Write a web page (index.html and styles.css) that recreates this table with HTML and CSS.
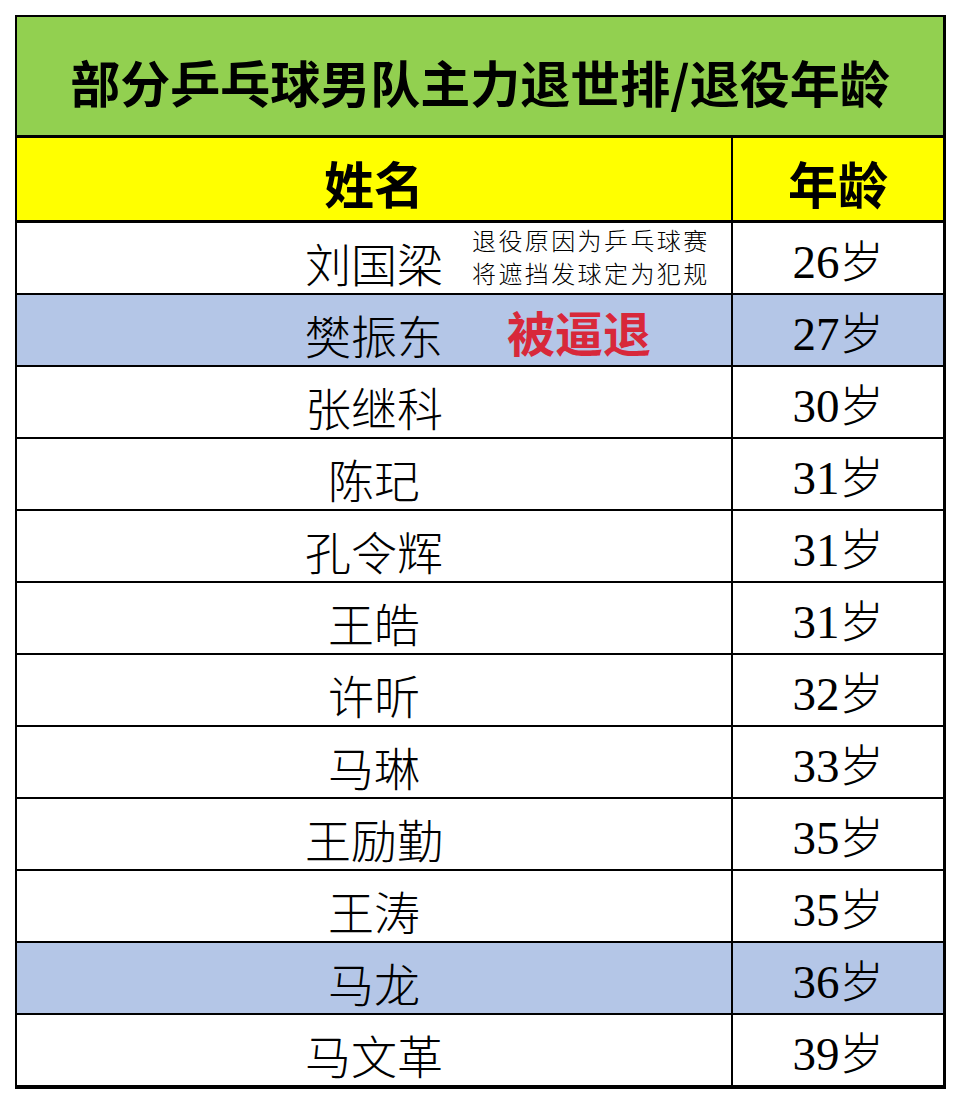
FILE: index.html
```html
<!DOCTYPE html>
<html lang="zh-CN">
<head>
<meta charset="utf-8">
<title>部分乒乓球男队主力退世排/退役年龄</title>
<link rel="stylesheet" href="styles.css">
</head>
<body>
<div class="page">
  <table class="sheet">
    <colgroup>
      <col class="name-col">
      <col class="age-col">
    </colgroup>
    <tr class="title-row">
      <td colspan="2" class="title">部分乒乓球男队主力退世排/退役年龄</td>
    </tr>
    <tr class="head-row">
      <td class="head">姓名</td>
      <td class="head age-head">年龄</td>
    </tr>
    <tr class="row">
      <td class="name"><div class="cell">刘国梁<div class="note"><div class="note-line">退役原因为乒乓球赛</div><div class="note-line">将遮挡发球定为犯规</div></div></div></td>
      <td class="age"><span class="num">26</span>岁</td>
    </tr>
    <tr class="row blue">
      <td class="name"><div class="cell">樊振东<span class="forced">被逼退</span></div></td>
      <td class="age"><span class="num">27</span>岁</td>
    </tr>
    <tr class="row"><td class="name">张继科</td><td class="age"><span class="num">30</span>岁</td></tr>
    <tr class="row"><td class="name">陈玘</td><td class="age"><span class="num">31</span>岁</td></tr>
    <tr class="row"><td class="name">孔令辉</td><td class="age"><span class="num">31</span>岁</td></tr>
    <tr class="row"><td class="name">王皓</td><td class="age"><span class="num">31</span>岁</td></tr>
    <tr class="row"><td class="name">许昕</td><td class="age"><span class="num">32</span>岁</td></tr>
    <tr class="row"><td class="name">马琳</td><td class="age"><span class="num">33</span>岁</td></tr>
    <tr class="row"><td class="name">王励勤</td><td class="age"><span class="num">35</span>岁</td></tr>
    <tr class="row"><td class="name">王涛</td><td class="age"><span class="num">35</span>岁</td></tr>
    <tr class="row blue"><td class="name">马龙</td><td class="age"><span class="num">36</span>岁</td></tr>
    <tr class="row last"><td class="name">马文革</td><td class="age"><span class="num">39</span>岁</td></tr>
  </table>
</div>
</body>
</html>
```

FILE: styles.css
```css
html, body {
  margin: 0;
  padding: 0;
  background: #ffffff;
}

.page {
  padding: 15px 0 0 15px;
}

.sheet {
  border-collapse: separate;
  border-spacing: 0;
  width: 931px;
  table-layout: fixed;
  border-top: 2px solid #000;
  border-left: 2px solid #000;
  border-right: 3px solid #000;
  border-bottom: 4px solid #000;
  color: #000;
  font-family: "Noto Sans CJK SC", "Noto Sans", sans-serif;
}

.name-col {
  width: 714px;
}

.age-col {
  width: 212px;
}

.sheet td {
  padding: 0;
  text-align: center;
  vertical-align: middle;
  box-sizing: border-box;
  line-height: 1;
}

.title {
  background: #92d050;
  height: 121px;
  font-size: 50px;
  font-weight: 700;
  border-bottom: 3px solid #000;
  padding-top: 10px !important;
}

.head {
  background: #ffff00;
  height: 85px;
  font-size: 50px;
  font-weight: 700;
  border-bottom: 3px solid #000;
  padding-top: 6px !important;
}

.age-head {
  border-left: 2px solid #000;
}

.row td {
  height: 72px;
  border-bottom: 2px solid #000;
}

.row.last td {
  height: 70px;
  border-bottom: none;
}

.row.blue td {
  background: #b4c6e7;
}

.name {
  font-size: 46px;
  font-weight: 300;
  padding-top: 8px !important;
}

.age {
  border-left: 2px solid #000;
  font-size: 44px;
  font-weight: 300;
  padding-top: 6px !important;
}

.num {
  font-family: "Liberation Serif", "Times New Roman", serif;
  font-size: 47px;
  font-weight: 400;
}

.cell {
  position: relative;
}

.note {
  position: absolute;
  left: 455px;
  top: -16px;
  display: flex;
  flex-direction: column;
  font-size: 24px;
  letter-spacing: 2.4px;
  font-weight: 300;
  text-align: left;
  white-space: nowrap;
}

.note-line {
  height: 33px;
  line-height: 33px;
}

.forced {
  position: absolute;
  left: 490px;
  top: -4px;
  font-size: 48px;
  font-weight: 700;
  color: #d8283a;
  white-space: nowrap;
}
```
